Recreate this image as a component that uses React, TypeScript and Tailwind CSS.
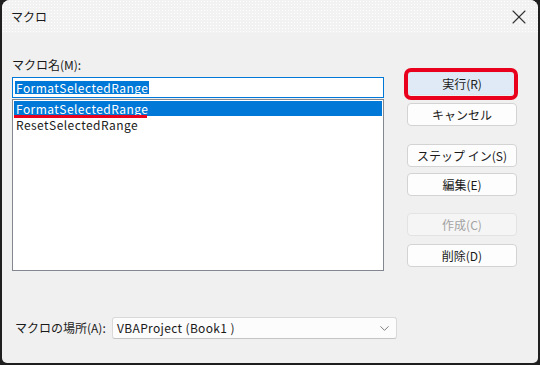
import { X, ChevronDown } from 'lucide-react'

const FONT = "font-['Noto_Sans_CJK_JP','Noto_Sans',sans-serif]"

function DlgButton({
  label,
  className = '',
  disabled = false,
  isDefault = false,
}: {
  label: string
  className?: string
  disabled?: boolean
  isDefault?: boolean
}) {
  return (
    <div className={`relative ${className}`}>
      <button
        disabled={disabled}
        className={
          'flex h-[23px] w-[110px] items-center justify-center rounded-[4px] border text-[12px] leading-none ' +
          (disabled
            ? 'border-[#e3e3e3] bg-[#f5f5f5] text-[#a3a3a3]'
            : isDefault
              ? 'border-[#dce6f1] bg-[#dfeaf6] text-[#1a1a1a]'
              : 'border-[#d3d3d3] bg-[#fdfdfd] text-[#1a1a1a]')
        }
      >
        {label}
      </button>
      {/* annotation box drawn over the default button */}
      {isDefault && (
        <span className="pointer-events-none absolute -left-[3px] -right-px -top-[4px] -bottom-[5px] rounded-[7px] border-[4px] border-[#e8001c]" />
      )}
    </div>
  )
}

export default function App() {
  return (
    <div className={`h-[365px] w-[540px] bg-[#1f1f1f] ${FONT}`}>
      <div className="mx-[2px] flex h-[363px] flex-col overflow-hidden rounded-t-[8px] rounded-b-[5px] bg-[#f0f0f0]">
        {/* Title bar */}
        <div className="flex h-[33px] items-center justify-between bg-[#f2f2f2] bg-[radial-gradient(#ffffff_0.7px,transparent_0.8px)] bg-[length:3px_3px] pl-[9px] pr-[7px]">
          <span className="text-[12px] text-[#1a1a1a]">マクロ</span>
          <X className="h-[24px] w-[24px] text-[#333]" strokeWidth={1.1} />
        </div>

        {/* Body */}
        <div className="flex flex-1 flex-col">
          <div className="flex pl-[10px] pt-[24px]">
            {/* Left column */}
            <div className="flex w-[372px] flex-col">
              <div className="h-[16px] text-[12px] leading-[16px] text-[#1a1a1a]">マクロ名(M):</div>
              <div className="mt-[4px] flex h-[21px] items-center border border-[#0078d7] bg-white pl-[2px]">
                <span className="bg-[#0078d7] px-px text-[12px] leading-[13px] tracking-[0.45px] text-white">FormatSelectedRange</span>
              </div>
              <div className="mt-px h-[172px] border border-[#828790] bg-white p-px">
                <div className="relative flex h-[15px] items-center bg-[#0078d7] pl-[2px] text-[12px] leading-none tracking-[0.45px] text-white">
                  FormatSelectedRange
                  <span className="pointer-events-none absolute left-0 top-[14px] h-[3px] w-[133px] bg-[#e8001c]" />
                </div>
                <div className="flex h-[15px] items-center pl-[2px] pt-[2px] text-[12px] leading-none tracking-[0.45px] text-[#1a1a1a]">
                  ResetSelectedRange
                </div>
              </div>
            </div>

            {/* Right column */}
            <div className="ml-[23px] flex flex-col pt-[15px]">
              <DlgButton label="実行(R)" isDefault />
              <DlgButton label="キャンセル" className="mt-[8px]" />
              <DlgButton label="ステップ イン(S)" className="mt-[18px]" />
              <DlgButton label="編集(E)" className="mt-[6px]" />
              <DlgButton label="作成(C)" className="mt-[17px]" disabled />
              <DlgButton label="削除(D)" className="mt-[8px]" />
            </div>
          </div>

          {/* Location */}
          <div className="mt-[46px] flex items-center pl-[13px]">
            <span className="w-[97px] text-[12px] text-[#1a1a1a]">マクロの場所(A):</span>
            <div className="flex h-[22px] w-[285px] items-center justify-between rounded-[3px] border border-[#d9d9d9] border-b-[#c4c4c4] bg-[#fcfcfc] pl-[4px] pr-[4px]">
              <span className="text-[12px] tracking-[0.35px] text-[#1a1a1a]">VBAProject (Book1 )</span>
              <ChevronDown className="h-[15px] w-[15px] text-[#606060]" strokeWidth={1.3} />
            </div>
          </div>
        </div>
      </div>
    </div>
  )
}
